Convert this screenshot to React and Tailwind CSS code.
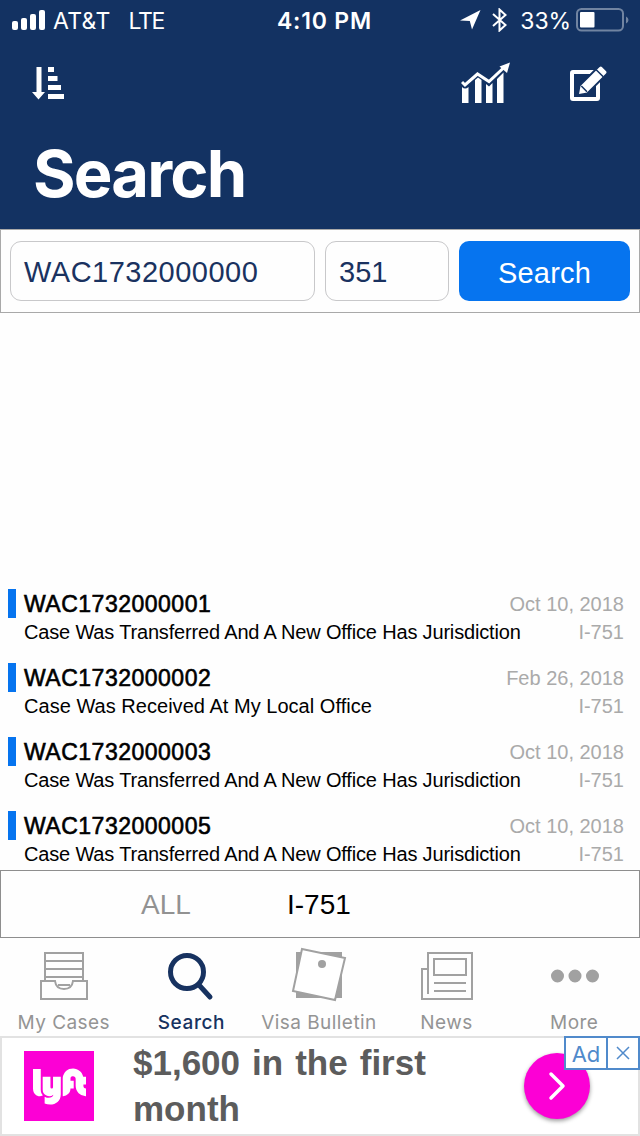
import React from "react";
import { SiLyft } from "react-icons/si";

const cases = [
  { id: "WAC1732000001", status: "Case Was Transferred And A New Office Has Jurisdiction", date: "Oct 10, 2018", tracking: "tracking-[-0.170px]" },
  { id: "WAC1732000002", status: "Case Was Received At My Local Office", date: "Feb 26, 2018", tracking: "tracking-[0.030px]" },
  { id: "WAC1732000003", status: "Case Was Transferred And A New Office Has Jurisdiction", date: "Oct 10, 2018", tracking: "tracking-[-0.170px]" },
  { id: "WAC1732000005", status: "Case Was Transferred And A New Office Has Jurisdiction", date: "Oct 10, 2018", tracking: "tracking-[-0.170px]" },
];

function StatusBar() {
  return (
    <div className="flex h-10 items-center pl-3 pr-[10px] font-['Inter',sans-serif] text-[23px] leading-[38px]">
      <div className="flex flex-1 items-center">
        <svg width="34" height="21" viewBox="0 0 34 21" fill="#fff">
          <rect x="0" y="11" width="6" height="9" rx="2" />
          <rect x="9" y="8" width="6" height="12" rx="2" />
          <rect x="18" y="4" width="6" height="16" rx="2" />
          <rect x="27" y="0" width="6" height="20" rx="2" />
        </svg>
        <span className="ml-[7px] pt-0.5 tracking-[0.3px]">AT&amp;T</span>
        <span className="ml-[18px] pt-0.5 tracking-[-1.400px]">LTE</span>
      </div>
      <span className="ml-[7px] pt-0.5 font-semibold tracking-[0.8px]">4:10 PM</span>
      <div className="flex flex-1 items-center justify-end">
        <svg width="21" height="20" viewBox="0 0 21 20" fill="#fff">
          <path d="M20.500 0L0 10.500L9.800 11L12 19.500Z" />
        </svg>
        <svg className="ml-[11px]" width="16" height="24" viewBox="0 0 16 24" fill="none" stroke="#fff" strokeWidth="2">
          <path d="M1 6L13.500 17L7.500 22.500V1.500L13.500 7L1 18" />
        </svg>
        <span className="ml-[12px] pt-0.5 tracking-[-0.100px]">33%</span>
        <svg className="ml-[5px]" width="54" height="24" viewBox="0 0 54 24">
          <rect x="1" y="1" width="46" height="21.500" rx="4.500" fill="none" stroke="#7184a1" strokeWidth="2" />
          <rect x="4" y="4" width="14.500" height="15.500" rx="1" fill="#fff" />
          <path d="M50 8.500Q52.500 9.500 52.500 12T50 15.500Z" fill="#7184a1" />
        </svg>
      </div>
    </div>
  );
}

function Header() {
  return (
    <header className="h-[229px] bg-[#133262] text-white">
      <StatusBar />
      <div className="flex h-[86px] items-center pl-8 pr-8">
        <svg width="33" height="33" viewBox="0 0 33 33" fill="#fff">
          <path d="M4.500 0H9.500V25H13L6.500 32.500L0 25H4.500ZM16 0h6v5h-6zM16 9h9.500v5H16zM16 18h13v5H16zM16 27h16v5H16z" />
        </svg>
        <svg className="ml-auto" width="50" height="42" viewBox="0 0 50 42" fill="#fff">
          <path d="M1 25Q4 28 7.500 25V41H1ZM14 18L17 15.500L20.500 18V41H14ZM25 22L28 24.500L31.500 21V41H25ZM36 17L42.500 10.500V41H36Z" />
          <path d="M1 20L4 23L16.500 12L28 19.500L43.500 5" fill="none" stroke="#fff" strokeWidth="3" />
          <path d="M38.500 4.500L49 0.500L46 11Z" />
        </svg>
        <svg className="ml-[59px]" width="38" height="38" viewBox="0 0 38 38">
          <rect x="2" y="8" width="26" height="27" rx="1" fill="none" stroke="#fff" strokeWidth="4" />
          <g transform="translate(8.500 30.500) rotate(-45)">
            <path d="M-1 0L7 -5.500H34Q37 -5.500 37 -3V3Q37 5.500 34 5.500H7Z" fill="#fff" stroke="#133262" strokeWidth="2" />
            <path d="M8 -4V4M30 -5V5" stroke="#133262" strokeWidth="1.500" />
          </g>
        </svg>
      </div>
      <h1 className="pl-[33px] pt-0.5 font-['Inter',sans-serif] text-[65px] font-bold leading-[92px] tracking-[-1.800px]">Search</h1>
    </header>
  );
}

function SearchForm() {
  return (
    <div className="flex h-[84px] gap-[10px] border border-[#a9a9a9] px-[9px] pt-[11px] text-[29px] leading-[60px] text-[#1a3260]">
      <div className="h-[60px] w-[305px] rounded-[11px] border border-[#c8c8ca] pl-[13px] tracking-[0.500px]">WAC1732000000</div>
      <div className="h-[60px] w-[124px] rounded-[11px] border border-[#c8c8ca] pl-[13px]">351</div>
      <div className="h-[60px] w-[171px] rounded-[10px] bg-[#0674ef] pt-[2px] text-center tracking-[0.200px] text-white">Search</div>
    </div>
  );
}

function CaseRow({ item }) {
  return (
    <div className="flex h-[74px] shrink-0 pl-2 pr-4 pt-2">
      <div className="h-[29px] w-2 shrink-0 bg-[#0674ef]" />
      <div className="ml-2 w-[480px] whitespace-nowrap text-black">
        <div className="text-[23px] leading-[30px] tracking-[0.500px] [-webkit-text-stroke:0.6px_#000]">{item.id}</div>
        <div className={"text-[20px] leading-[27px] " + item.tracking}>{item.status}</div>
      </div>
      <div className="flex-1 whitespace-nowrap text-right text-[20px] text-[#aaa]">
        <div className="leading-[30px]">{item.date}</div>
        <div className="leading-[27px]">I-751</div>
      </div>
    </div>
  );
}

function Tab({ label, active, children }) {
  return (
    <div className={active ? "flex flex-1 flex-col items-center text-[#173260]" : "flex flex-1 flex-col items-center text-[#949494]"}>
      <svg width="64" height="72" viewBox="0 0 64 72" fill="none" stroke="#a1a1a1" strokeWidth="2">
        {children}
      </svg>
      <span className={active ? "whitespace-nowrap font-['Inter',sans-serif] text-[19px] font-medium leading-[26px] tracking-[0.600px]" : "whitespace-nowrap font-['Inter',sans-serif] text-[19px] leading-[26px] tracking-[0.450px]"}>{label}</span>
    </div>
  );
}

function TabBar() {
  return (
    <nav className="flex h-[98px] pr-0.5">
      <Tab label="My Cases">
        <path d="M13 44V15H51V44M13 23H51M13 31H51M13 39H51" />
        <path d="M9 43H23Q24 51 32 51T41 43H55V61H9ZM26 47H38" />
      </Tab>
      <Tab label="Search" active>
        <circle cx="28" cy="34" r="16.500" stroke="#173260" strokeWidth="5" />
        <path d="M40 47L51 59" stroke="#173260" strokeWidth="5" strokeLinecap="round" />
      </Tab>
      <Tab label="Visa Bulletin">
        <path d="M9 14H55V60H9Z" fill="#a1a1a1" stroke="none" />
        <path d="M15 11L58 20L48 62L6 53Z" fill="#fff" />
        <circle cx="35" cy="26" r="4" fill="#a1a1a1" stroke="none" />
      </Tab>
      <Tab label="News">
        <path d="M13 56V15H57V61H7V31H13M19 21H51V37H19ZM19 45H51M19 53H51" />
      </Tab>
      <Tab label="More">
        <path d="M15.500 38h0M33 38h0M50.500 38h0" strokeWidth="13" strokeLinecap="round" />
      </Tab>
    </nav>
  );
}

function AdBanner() {
  return (
    <div className="relative flex h-[100px] border-2 border-[#e2e2e2] bg-white">
      <div className="ml-[22px] mt-[13px] flex h-[70px] w-[70px] items-center justify-center bg-[#fc00d5]">
        <SiLyft className="h-[53px] w-[53px] text-white" />
      </div>
      <div className="ml-[39px] mt-[2px] w-[340px] text-[35px] font-bold leading-[46px] text-[#5c5c5c] [word-spacing:2.3px]">$1,600 in the first month</div>
      <div className="ml-[51px] mt-[15px] flex h-[66px] w-[66px] items-center justify-center rounded-full bg-[#fc00d5] shadow-[0_2px_4px_rgba(0,0,0,0.4)]">
        <svg width="18" height="30" viewBox="0 0 18 30" fill="none" stroke="#fff" strokeWidth="3.500" strokeLinecap="round" strokeLinejoin="round">
          <path d="M3 3L15 15L3 27" />
        </svg>
      </div>
      <div className="absolute -right-0.5 -top-0.5 flex h-[34px] w-[76px] border-2 border-[#508acb] bg-white text-[#508acb]">
        <span className="w-[42px] border-r-2 border-[#508acb] text-center font-['Inter',sans-serif] text-[22px] leading-[33px]">Ad</span>
        <svg className="ml-2 mt-2" width="14" height="14" viewBox="0 0 14 14" stroke="currentColor" strokeWidth="1.500">
          <path d="M1 1L13 13M13 1L1 13" />
        </svg>
      </div>
    </div>
  );
}

export default function App() {
  return (
    <div className="flex h-[1136px] w-[640px] flex-col overflow-hidden bg-[#fefefe] font-['Liberation_Sans',Arial,sans-serif]">
      <Header />
      <SearchForm />
      <main className="flex h-[557px] flex-col overflow-hidden pt-[268px]">
        {cases.map((item) => (
          <CaseRow key={item.id} item={item} />
        ))}
      </main>
      <div className="flex h-[68px] border border-[#8e8e8e] text-[28px] leading-[68px]">
        <span className="ml-[140px] w-[146px] text-[#929292]">ALL</span>
        <span className="text-black">I-751</span>
      </div>
      <TabBar />
      <AdBanner />
    </div>
  );
}
